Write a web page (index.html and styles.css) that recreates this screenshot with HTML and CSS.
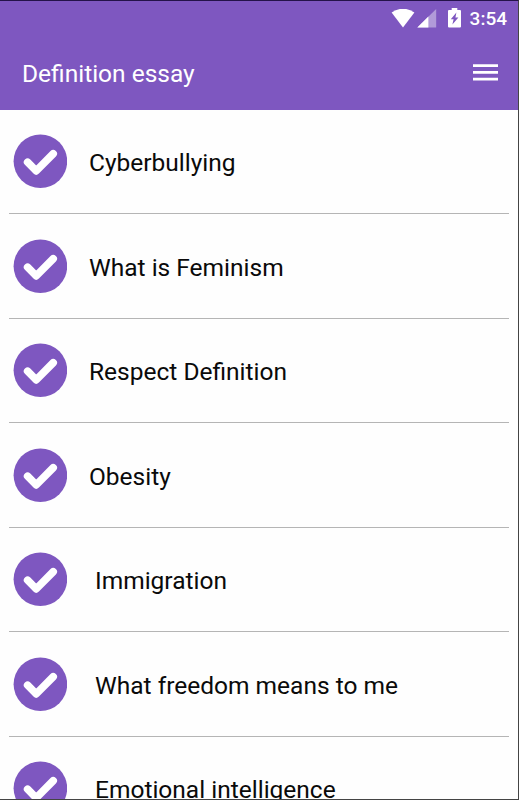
FILE: index.html
```html
<!DOCTYPE html>
<html lang="en">
<head>
  <meta charset="UTF-8">
  <meta name="viewport" content="width=device-width, initial-scale=1.0">
  <title>Definition essay</title>
  <link rel="stylesheet" href="styles.css">
</head>
<body>

  <!-- shared check icon -->
  <svg class="defs" width="0" height="0">
    <symbol id="check" viewBox="0 0 54 54">
      <circle cx="27.4" cy="27.2" r="26.8" fill="#7e57c0"/>
      <path d="M14.6 28.2 L23.2 36.9 L40.2 19.8" fill="none" stroke="#fff" stroke-width="7.6" stroke-linecap="round" stroke-linejoin="round"/>
    </symbol>
  </svg>

  <div class="screen">
    <header class="header">
      <div class="status-bar">
        <svg class="wifi" width="24" height="20" viewBox="0 0 24 20">
          <path d="M0.6 3.6 Q12 -4.2 23.4 3.6 L12 18.6 Z" fill="#fff"/>
        </svg>
        <svg class="signal" width="20" height="19" viewBox="0 0 20 19">
          <path d="M0.3 18.5 L19.2 0 V18.5 Z" fill="#fff" fill-opacity="0.4"/>
          <path d="M0.3 18.5 L11.4 7.6 V18.5 Z" fill="#fff"/>
        </svg>
        <svg class="battery" width="13" height="20" viewBox="0 0 13 20">
          <path d="M3.7 0 H9.3 V2 H12 Q13 2 13 3 V18.5 Q13 19.5 12 19.5 H1 Q0 19.5 0 18.5 V3 Q0 2 1 2 H3.7 Z" fill="#fff"/>
          <path d="M8.4 4.6 L2.8 11.2 H5.6 L4.4 16.6 L10.4 9.6 H7.4 Z" fill="#7e57c0"/>
        </svg>
        <span class="time">3:54</span>
      </div>
      <div class="toolbar">
        <h1 class="title">Definition essay</h1>
        <button class="menu" aria-label="Menu">
          <svg width="25" height="17" viewBox="0 0 25 17">
            <path d="M0 1.6 H25 M0 8.4 H25 M0 15.2 H25" stroke="#fff" stroke-width="2.8"/>
          </svg>
        </button>
      </div>
    </header>

    <ul class="list">
      <li class="row"><svg class="icon"><use href="#check"/></svg><span class="label">Cyberbullying</span></li>
      <li class="row"><svg class="icon"><use href="#check"/></svg><span class="label">What is Feminism</span></li>
      <li class="row"><svg class="icon"><use href="#check"/></svg><span class="label">Respect Definition</span></li>
      <li class="row"><svg class="icon"><use href="#check"/></svg><span class="label">Obesity</span></li>
      <li class="row"><svg class="icon"><use href="#check"/></svg><span class="label indent">Immigration</span></li>
      <li class="row"><svg class="icon"><use href="#check"/></svg><span class="label indent">What freedom means to me</span></li>
      <li class="row"><svg class="icon"><use href="#check"/></svg><span class="label indent">Emotional intelligence</span></li>
    </ul>
  </div>

</body>
</html>
```

FILE: styles.css
```css
* {
  box-sizing: border-box;
}
body {
  margin: 0;
  font-family: Roboto, sans-serif;
  background-color: #fefefe;
}
.defs {
  display: block;
}
.screen {
  height: 800px;
  overflow: hidden;
  border-top: 1px solid #24124a;
  border-right: 1px solid #444;
  border-bottom: 1px solid #444;
}
.header {
  height: 109px;
  background-color: #7e57c0;
  color: #fff;
}
.status-bar {
  display: flex;
  align-items: flex-start;
  justify-content: flex-end;
  height: 36px;
  padding: 7px 11px 0 0;
}
.wifi {
  margin-top: 1px;
}
.signal {
  margin-left: 2px;
  margin-top: 1px;
}
.battery {
  margin-left: 11px;
}
.time {
  margin-left: 9px;
  font-size: 19px;
  font-weight: 500;
  line-height: 21px;
}
.toolbar {
  display: flex;
  align-items: center;
  justify-content: space-between;
  height: 72px;
  padding: 0 20px 0 22px;
}
.title {
  margin: 0;
  padding-top: 1px;
  font-size: 24.5px;
  font-weight: 400;
}
.menu {
  display: flex;
  padding: 0 0 2px;
  border: none;
  background: none;
}
.list {
  margin: -0.5px 0 0;
  padding: 0 9px;
  list-style: none;
}
.row {
  display: flex;
  align-items: center;
  height: 104.5px;
  padding-left: 4px;
  border-bottom: 1px solid #b5b5b5;
}
.icon {
  width: 54px;
  height: 54px;
}
.label {
  margin-left: 22px;
  padding-top: 3px;
  font-size: 24.5px;
  color: #0a0a0a;
}
.indent {
  margin-left: 28px;
}
```
